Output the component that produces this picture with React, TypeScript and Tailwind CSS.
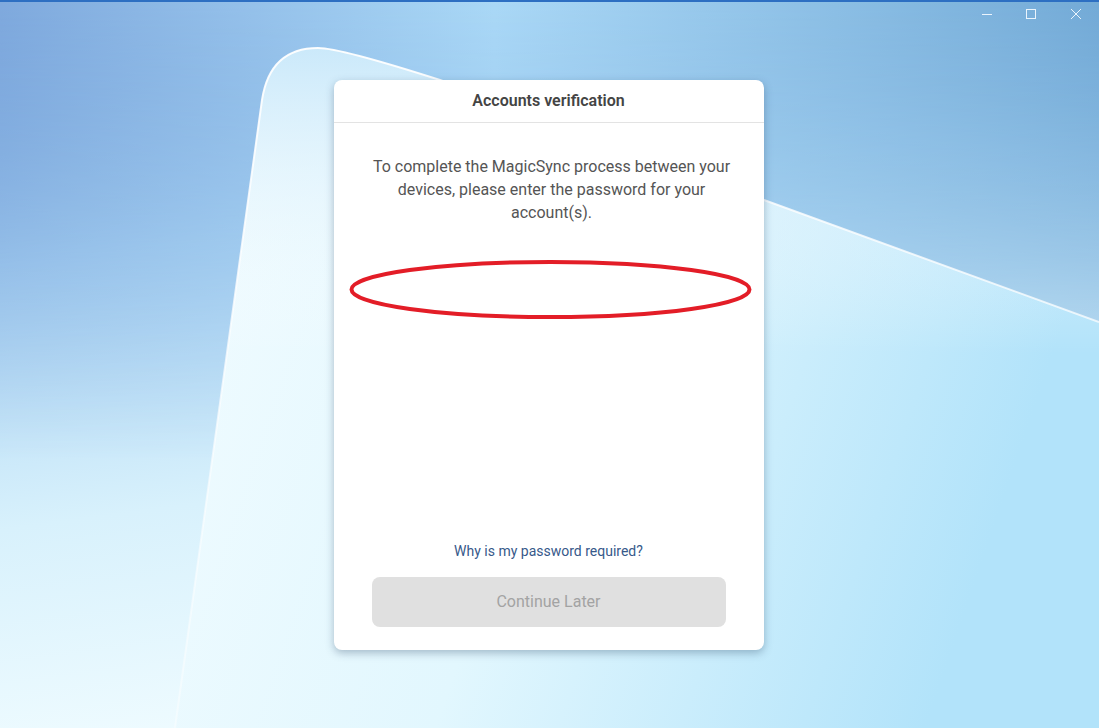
import React from 'react';

const SHEET =
  'M175 728 L262 100 Q270 48 318 48 Q340 48 440 80 L764 200 L1099 322 L1099 728 Z';

function Wallpaper() {
  return (
    <svg className="absolute inset-0 h-full w-full" viewBox="0 0 1099 728" preserveAspectRatio="none">
      <defs>
        <linearGradient id="base" x1="0" y1="0" x2="0.2" y2="1">
          <stop offset="0" stopColor="#6e9dd8" />
          <stop offset="0.35" stopColor="#a9d3f3" />
          <stop offset="0.7" stopColor="#d8f1fc" />
          <stop offset="1" stopColor="#eefbff" />
        </linearGradient>
        <linearGradient id="sky" x1="0" y1="0" x2="1" y2="0">
          <stop offset="0" stopColor="#7fa9dd" />
          <stop offset="0.45" stopColor="#aad8f6" />
          <stop offset="1" stopColor="#73aad6" />
        </linearGradient>
        <linearGradient id="skyFade" x1="0" y1="0" x2="0" y2="1">
          <stop offset="0" stopColor="#fff" stopOpacity="1" />
          <stop offset="0.55" stopColor="#fff" stopOpacity="0.5" />
          <stop offset="1" stopColor="#fff" stopOpacity="0" />
        </linearGradient>
        <mask id="skyMask">
          <rect width="1099" height="460" fill="url(#skyFade)" />
        </mask>
        <linearGradient id="sheet" x1="0" y1="0" x2="1" y2="0.25">
          <stop offset="0" stopColor="#f2fcff" />
          <stop offset="0.5" stopColor="#e2f7fe" />
          <stop offset="1" stopColor="#b2e3fa" />
        </linearGradient>
        <linearGradient id="sheetTop" x1="0" y1="0" x2="0" y2="1">
          <stop offset="0" stopColor="#c9e8fa" stopOpacity="0.95" />
          <stop offset="0.45" stopColor="#ffffff" stopOpacity="0" />
        </linearGradient>
        <linearGradient id="edge" x1="0" y1="0" x2="0" y2="1">
          <stop offset="0" stopColor="#ffffff" stopOpacity="0.95" />
          <stop offset="1" stopColor="#ffffff" stopOpacity="0.4" />
        </linearGradient>
      </defs>
      <rect width="1099" height="728" fill="url(#base)" />
      <rect width="1099" height="460" fill="url(#sky)" mask="url(#skyMask)" />
      <path d={SHEET} fill="url(#sheet)" />
      <path d={SHEET} fill="url(#sheetTop)" />
      <path
        d="M175 728 L262 100 Q270 48 318 48 Q340 48 440 80 L764 200 L1099 322"
        fill="none"
        stroke="url(#edge)"
        strokeWidth="2"
      />
      <rect width="1099" height="2" fill="#2d6fc2" />
    </svg>
  );
}

function WindowControls() {
  return (
    <div className="absolute right-0 top-0 flex h-[28px] items-center">
      <div className="flex h-full w-[44px] items-center justify-center">
        <svg width="12" height="12" viewBox="0 0 12 12">
          <path d="M1 6.5h10" stroke="#eaf4fc" strokeWidth="1" />
        </svg>
      </div>
      <div className="flex h-full w-[44px] items-center justify-center">
        <svg width="12" height="12" viewBox="0 0 12 12">
          <rect x="1.5" y="1.5" width="9" height="9" fill="none" stroke="#eaf4fc" strokeWidth="1" />
        </svg>
      </div>
      <div className="flex h-full w-[46px] items-center justify-center">
        <svg width="12" height="12" viewBox="0 0 12 12">
          <path d="M1 1l10 10M11 1L1 11" stroke="#eaf4fc" strokeWidth="1" />
        </svg>
      </div>
    </div>
  );
}

export default function App() {
  return (
    <div
      className="relative h-[728px] w-[1099px] overflow-hidden"
      style={{ fontFamily: 'Roboto, "Noto Sans", sans-serif' }}
    >
      <Wallpaper />
      <WindowControls />

      <div className="relative pt-[80px]">
        <div className="mx-auto flex h-[570px] w-[430px] -translate-x-px flex-col rounded-lg bg-white shadow-[0_3px_8px_rgba(40,70,100,0.35)]">
          <div className="flex h-[43px] items-center justify-center border-b border-[#e3e3e3]">
            <h1 className="text-[16px] font-semibold text-[#444]">Accounts verification</h1>
          </div>

          <p className="pl-[37px] pr-[31px] pt-[32px] text-center text-[16px] leading-[23px] text-[#555]">
            To complete the MagicSync process between your devices, please enter the password for your
            account(s).
          </p>

          <div className="flex-1" />

          <a href="#" className="text-center text-[14px] leading-[20px] text-[#37598a]">
            Why is my password required?
          </a>

          <button
            disabled
            className="mx-[38px] mb-[23px] mt-[16px] h-[50px] rounded-lg bg-[#e0e0e0] text-[16px] text-[#a3a3a3]"
          >
            Continue Later
          </button>
        </div>
      </div>

      {/* annotation drawn over the screenshot */}
      <svg className="pointer-events-none absolute left-[348px] top-[259px]" width="406" height="62" viewBox="0 0 406 62">
        <ellipse cx="202.5" cy="30.5" rx="199" ry="27.5" fill="none" stroke="#e31d27" strokeWidth="4" />
      </svg>
    </div>
  );
}
